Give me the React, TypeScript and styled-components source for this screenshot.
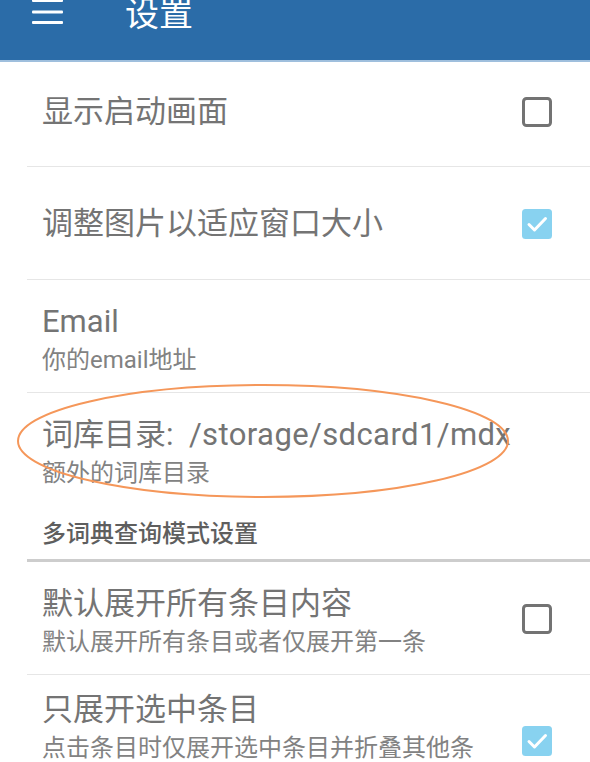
import React from "react";
import styled, { createGlobalStyle } from "styled-components";

const Global = createGlobalStyle`
  html, body { margin: 0; padding: 0; background: #ffffff; }
  body { font-family: Roboto, "Noto Sans CJK SC", sans-serif; }
  * { box-sizing: border-box; }
`;

const Page = styled.div`
  position: relative;
  width: 590px;
  height: 762px;
  overflow: hidden;
  background: #ffffff;
`;

const Header = styled.header`
  height: 62px;
  background: #2b6ca8;
  border-bottom: 2px solid #9fbfdd;
  overflow: hidden;
`;

const Bar = styled.div`
  display: flex;
  align-items: flex-start;
  height: 30px;
  padding-left: 32px;
`;

const MenuIcon = styled.svg`
  flex: none;
  width: 31px;
  height: 26px;
`;

const HeaderTitle = styled.h1`
  margin: 0 0 0 62px;
  font-family: Roboto, "Noto Sans CJK SC", sans-serif;
  font-weight: 400;
  font-size: 34px;
  line-height: 28px;
  color: #ffffff;
`;

const List = styled.div`
  margin-left: 27px;
  display: flex;
  flex-direction: column;
`;

const Row = styled.div<{ $crop?: boolean; $noDivider?: boolean }>`
  display: flex;
  align-items: center;
  min-height: ${(p) => (p.$crop ? "105px" : "113px")};
  padding: ${(p) => (p.$crop ? "0 38px 4px 15px" : "12px 38px 10px 15px")};
  border-bottom: ${(p) => (p.$noDivider ? "none" : "1px solid #e6e6e6")};
`;

const TextCol = styled.div`
  flex: 1;
  min-width: 0;
  display: flex;
  flex-direction: column;
`;

const ItemTitle = styled.div`
  font-size: 31px;
  line-height: 46px;
  color: #747474;
  white-space: nowrap;
`;

const Path = styled.span`
  letter-spacing: 0.4px;
`;

const ItemSub = styled.div`
  font-size: 24px;
  line-height: 31px;
  color: #828282;
`;

const Category = styled.div`
  padding: 10px 15px 7px 15px;
  font-size: 24px;
  line-height: 36px;
  font-weight: 500;
  color: #5e5e5e;
  border-bottom: 3px solid #cdcdcd;
`;

const Box = styled.svg`
  flex: none;
  width: 30px;
  height: 30px;
  margin-left: 32px;
`;

const Annotation = styled.svg`
  position: absolute;
  left: 16px;
  top: 383px;
  width: 496px;
  height: 118px;
  pointer-events: none;
`;

function Checkbox({ checked }: { checked?: boolean }) {
  return checked ? (
    <Box viewBox="0 0 30 30">
      <rect x="0" y="0" width="30" height="30" rx="3.5" fill="#88d2f0" />
      <path
        d="M7 15.5 L12.5 21 L23.5 9.5"
        fill="none"
        stroke="#ffffff"
        strokeWidth="3"
        strokeLinecap="round"
        strokeLinejoin="round"
      />
    </Box>
  ) : (
    <Box viewBox="0 0 30 30">
      <rect
        x="1.5"
        y="1.5"
        width="27"
        height="27"
        rx="3"
        fill="none"
        stroke="#737373"
        strokeWidth="3"
      />
    </Box>
  );
}

export default function App() {
  return (
    <Page>
      <Global />
      <Header>
        <Bar>
          <MenuIcon viewBox="0 0 31 26">
            <rect x="0" y="-1" width="31" height="3" rx="1" fill="#ffffff" />
            <rect x="0" y="10.5" width="31" height="3" rx="1" fill="#ffffff" />
            <rect x="0" y="21" width="31" height="3" rx="1" fill="#ffffff" />
          </MenuIcon>
          <HeaderTitle>设置</HeaderTitle>
        </Bar>
      </Header>
      <List>
        <Row $crop>
          <TextCol>
            <ItemTitle>显示启动画面</ItemTitle>
          </TextCol>
          <Checkbox />
        </Row>
        <Row>
          <TextCol>
            <ItemTitle>调整图片以适应窗口大小</ItemTitle>
          </TextCol>
          <Checkbox checked />
        </Row>
        <Row>
          <TextCol>
            <ItemTitle>Email</ItemTitle>
            <ItemSub>你的email地址</ItemSub>
          </TextCol>
        </Row>
        <Row $noDivider>
          <TextCol>
            <ItemTitle>
              词库目录:{"\u00a0\u00a0"}
              <Path>/storage/sdcard1/mdx</Path>
            </ItemTitle>
            <ItemSub>额外的词库目录</ItemSub>
          </TextCol>
        </Row>
        <Category>多词典查询模式设置</Category>
        <Row>
          <TextCol>
            <ItemTitle>默认展开所有条目内容</ItemTitle>
            <ItemSub>默认展开所有条目或者仅展开第一条</ItemSub>
          </TextCol>
          <Checkbox />
        </Row>
        <Row>
          <TextCol>
            <ItemTitle>只展开选中条目</ItemTitle>
            <ItemSub>点击条目时仅展开选中条目并折叠其他条目</ItemSub>
          </TextCol>
          <Checkbox checked />
        </Row>
      </List>
      <Annotation viewBox="0 0 496 118">
        <ellipse
          cx="247"
          cy="58"
          rx="245"
          ry="56"
          fill="none"
          stroke="#f5975a"
          strokeWidth="2"
        />
      </Annotation>
    </Page>
  );
}
